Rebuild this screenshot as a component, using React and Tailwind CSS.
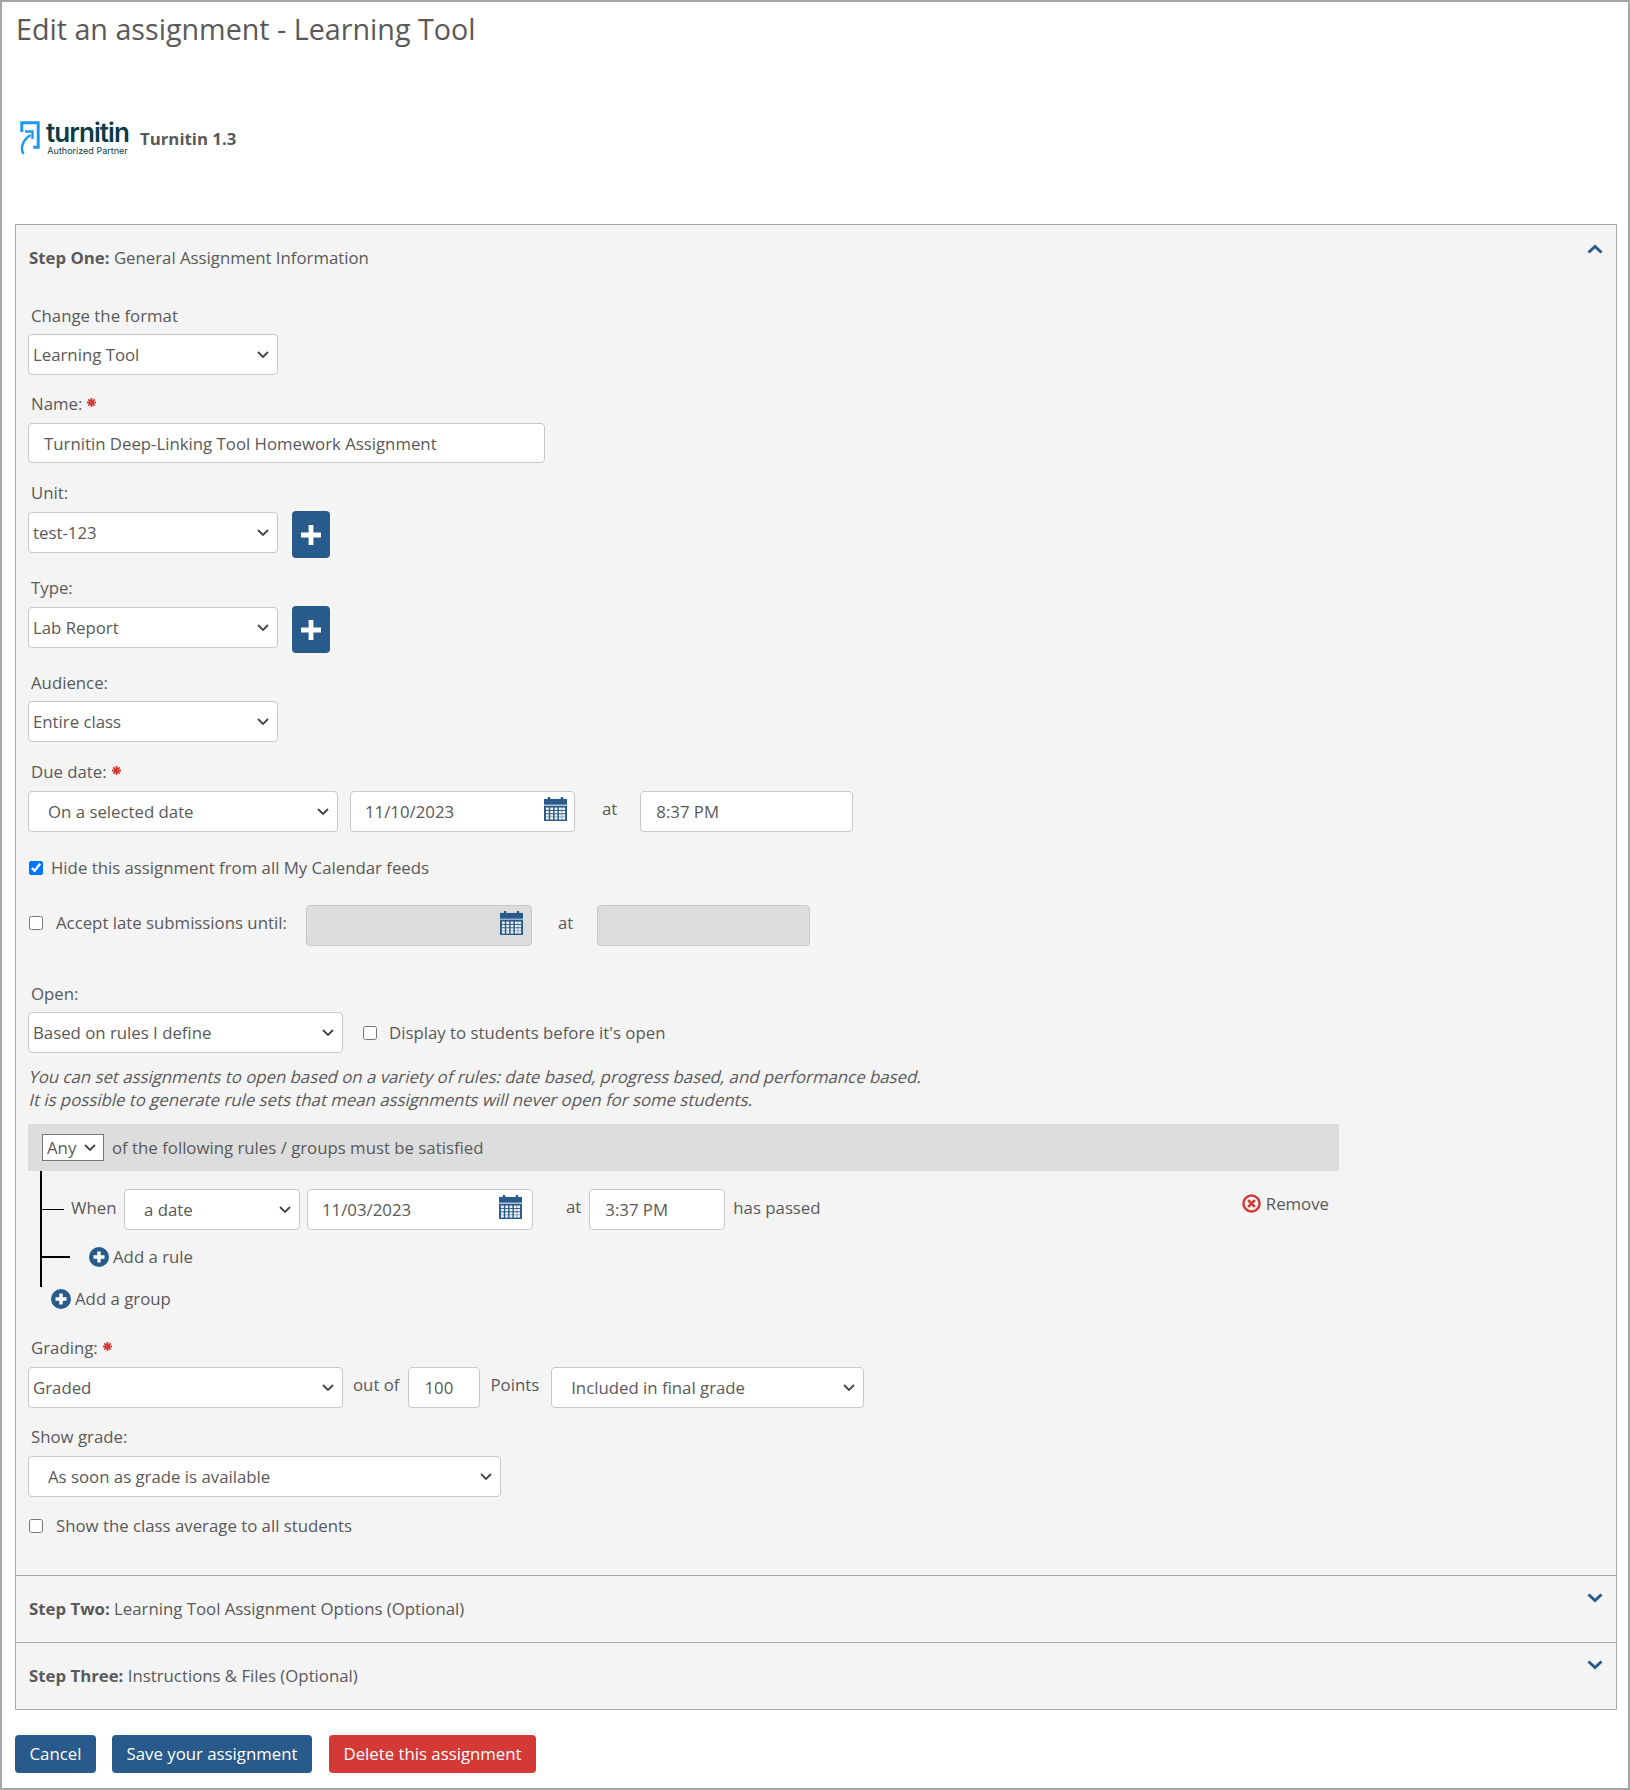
import React from 'react'

function Chevron({ up, className }) {
  return (
    <svg viewBox="0 0 16 10" className={className} fill="none" stroke="#285a8c" strokeWidth="3">
      <path d={up ? 'M1.5 8.5 8 2.5l6.5 6' : 'M1.5 1.5 8 7.5l6.5-6'} />
    </svg>
  )
}

function CalendarIcon() {
  return (
    <svg viewBox="0 0 24 25" className="w-[23px] h-[24px]">
      <rect x="4" y="0" width="2.5" height="4" fill="#285a8c" />
      <rect x="17.5" y="0" width="2.5" height="4" fill="#285a8c" />
      <rect x="0" y="2" width="24" height="6" fill="#285a8c" />
      <rect x="0" y="9" width="24" height="16" fill="#285a8c" />
      <g fill="#f4f4f4">
        {[2, 6.5, 11, 15.5, 19].map((x) =>
          [11, 14.5, 18, 21].map((y) => <rect key={x + '-' + y} x={x} y={y} width="3" height="2.5" />)
        )}
      </g>
    </svg>
  )
}

function PlusCircle() {
  return (
    <svg viewBox="0 0 20 20" className="w-[20px] h-[20px] shrink-0">
      <circle cx="10" cy="10" r="10" fill="#285a8c" />
      <path d="M10 4.5v11M4.5 10h11" stroke="#fff" strokeWidth="3.4" />
    </svg>
  )
}

function AddButton() {
  return (
    <button className="w-[38px] h-[47px] bg-[#285a8c] rounded-[4px] flex items-center justify-center ml-[14px]">
      <svg viewBox="0 0 22 22" className="w-[22px] h-[22px]">
        <path d="M11 1v20M1 11h20" stroke="#fff" strokeWidth="4.8" />
      </svg>
    </button>
  )
}

function Star() {
  return (
    <svg viewBox="0 0 10 10" className="inline-block w-[9px] h-[9px] ml-[5px] mb-[7px]" stroke="#d43936" strokeWidth="2">
      <path d="M5 0v10M0 5h10M1.500 1.500l7 7M8.500 1.500l-7 7" />
    </svg>
  )
}

function Label({ children, required, className = '' }) {
  return (
    <div className={`h-[22px] leading-[22px] pl-[3px] ${className}`}>
      {children}
      {required && <Star />}
    </div>
  )
}

function Select({ value, className = '', pad = 'pl-[4px]' }) {
  return (
    <div className={`relative h-[41px] shrink-0 ${className}`}>
      <select
        defaultValue={value}
        className={`appearance-none w-full h-full bg-white border border-[#c8c8c8] rounded-[4px] text-[#595959] ${pad}`}
      >
        <option>{value}</option>
      </select>
      <svg viewBox="0 0 12 7" className="absolute right-[9px] top-[17px] w-[12px] h-[7px] pointer-events-none" fill="none" stroke="#444444" strokeWidth="1.800">
        <path d="M1 1l5 5 5-5" />
      </svg>
    </div>
  )
}

function TextBox({ value, className = '', disabled }) {
  return (
    <input
      readOnly
      value={value}
      className={`h-[41px] border border-[#c8c8c8] rounded-[4px] text-[#595959] shrink-0 px-[15px] outline-none ${disabled ? 'bg-[#dddddd]' : 'bg-white'} ${className}`}
    />
  )
}

function DateBox({ value, className = '', iconRight = 'right-[7px]', disabled }) {
  return (
    <div className={`relative h-[41px] border border-[#c8c8c8] rounded-[4px] shrink-0 flex items-center pl-[14px] ${disabled ? 'bg-[#dddddd]' : 'bg-white'} ${className}`}>
      {value}
      <span className={`absolute top-[5px] ${iconRight}`}><CalendarIcon /></span>
    </div>
  )
}

function StepHeader({ step, title, up, className = '' }) {
  return (
    <div className={`relative pl-[13px] flex items-center ${className}`}>
      <div><span className="font-bold">{step}</span> {title}</div>
      <Chevron up={up} className={`absolute right-[13px] w-[16px] h-[10px] ${up ? 'top-[19px]' : 'top-[17px]'}`} />
    </div>
  )
}

export default function App() {
  return (
    <div className="w-[1630px] h-[1790px] border-2 border-[#a6a6a6] bg-white text-[#595959] text-[16.8px] font-['Open_Sans',sans-serif] pl-[13px] pr-[11px]">
      <h1 className="text-[28.7px] leading-[44px] pl-[1px] mt-[5px] h-[44px]">Edit an assignment - Learning Tool</h1>

      <div className="flex items-center mt-[68px] h-[38px] pl-[5px]">
        <svg viewBox="0 0 20 34" className="w-[20px] h-[34px] shrink-0">
          <path d="M1.8 11V1.8h16.4v24.4h-5" fill="none" stroke="#1c97f5" strokeWidth="3" />
          <path d="M3.5 33C0.500 28 1.500 20 10.500 14" fill="none" stroke="#1c97f5" strokeWidth="2.4" />
          <path d="M5 10.500h7.500v7.500" fill="none" stroke="#1c97f5" strokeWidth="2.4" />
        </svg>
        <div className="ml-[4px] w-[87px] flex flex-col items-center">
          <span className="font-['Inter',sans-serif] font-semibold text-[#0b3b44] text-[26px] leading-[26px] tracking-[-0.9px]">turnitin</span>
          <span className="text-[#0b3b44] text-[9px] leading-[10px] font-['Inter',sans-serif]">Authorized Partner</span>
        </div>
        <span className="ml-[9px] mt-[2px] font-bold">Turnitin 1.3</span>
      </div>

      <div className="mt-[67px] h-[1486px] border border-[#a9a9a9] bg-[#f4f4f4] flex flex-col">
        <StepHeader step="Step One:" title="General Assignment Information" up className="h-[66px] shrink-0" />

        <div className="flex-1 pl-[12px] pt-[14px]">
          <Label>Change the format</Label>
          <Select value="Learning Tool" className="w-[250px] mt-[7px]" />

          <Label required className="mt-[18px]">Name:</Label>
          <TextBox value="Turnitin Deep-Linking Tool Homework Assignment" className="w-[517px] !h-[40px] mt-[8px] block" />

          <Label className="mt-[19px]">Unit:</Label>
          <div className="flex items-start mt-[7px] h-[48px]">
            <Select value="test-123" className="w-[250px] mt-[1px]" />
            <AddButton />
          </div>

          <Label className="mt-[18px]">Type:</Label>
          <div className="flex items-start mt-[7px] h-[48px]">
            <Select value="Lab Report" className="w-[250px] mt-[1px]" />
            <AddButton />
          </div>

          <Label className="mt-[18px]">Audience:</Label>
          <Select value="Entire class" className="w-[250px] mt-[7px]" />

          <Label required className="mt-[19px]">Due date:</Label>
          <div className="flex items-start mt-[8px]">
            <Select value="On a selected date" className="w-[310px]" pad="pl-[19px]" />
            <DateBox value="11/10/2023" className="w-[225px] ml-[12px]" />
            <span className="ml-[27px] mt-[5px]">at</span>
            <TextBox value="8:37 PM" className="w-[213px] ml-[23px]" />
          </div>

          <label className="flex items-center h-[22px] mt-[25px]">
            <input type="checkbox" defaultChecked className="w-[14px] h-[14px] ml-[1px]" />
            <span className="ml-[8px]">Hide this assignment from all My Calendar feeds</span>
          </label>

          <div className="flex items-start mt-[26px]">
            <input type="checkbox" className="w-[14px] h-[14px] ml-[1px] mt-[11px]" />
            <span className="ml-[13px] mt-[5px] w-[250px]">Accept late submissions until:</span>
            <DateBox className="w-[226px]" iconRight="right-[8px]" disabled />
            <span className="ml-[26px] mt-[5px]">at</span>
            <TextBox value="" className="w-[213px] ml-[24px]" disabled />
          </div>

          <Label className="mt-[37px]">Open:</Label>
          <div className="flex items-center mt-[7px]">
            <Select value="Based on rules I define" className="w-[315px]" />
            <input type="checkbox" className="w-[14px] h-[14px] ml-[20px]" />
            <span className="ml-[12px]">Display to students before it's open</span>
          </div>

          <div className="mt-[12px] leading-[23px] h-[47px] -ml-[1px]">
            <span className="block origin-bottom-left -skew-x-[14deg]">You can set assignments to open based on a variety of rules: date based, progress based, and performance based.</span>
            <span className="block origin-bottom-left -skew-x-[14deg]">It is possible to generate rule sets that mean assignments will never open for some students.</span>
          </div>

          <div className="w-[1311px] h-[47px] bg-[#dddddd] mt-[12px] flex items-center pl-[14px]">
            <div className="relative w-[62px] h-[27px]">
              <select defaultValue="Any" className="appearance-none w-full h-full pl-[4px] bg-white border border-[#777777] text-[#595959]">
                <option>Any</option>
              </select>
              <svg viewBox="0 0 12 7" className="absolute right-[8px] top-[10px] w-[12px] h-[7px] pointer-events-none" fill="none" stroke="#444444" strokeWidth="1.800">
                <path d="M1 1l5 5 5-5" />
              </svg>
            </div>
            <span className="ml-[8px]">of the following rules / groups must be satisfied</span>
          </div>

          <div className="ml-[12px] w-[1300px] h-[116px] border-l-2 border-black">
            <div className="flex items-start pt-[18px]">
              <span className="w-[22px] h-px bg-black mt-[20px] shrink-0" />
              <span className="ml-[7px] mt-[6px] w-[53px] shrink-0">When</span>
              <Select value="a date" className="w-[176px]" pad="pl-[19px]" />
              <DateBox value="11/03/2023" className="w-[226px] ml-[7px]" iconRight="right-[10px]" />
              <span className="ml-[33px] mt-[5px]">at</span>
              <TextBox value="3:37 PM" className="w-[136px] ml-[8px]" />
              <span className="ml-[8px] mt-[6px]">has passed</span>
              <div className="ml-auto mr-[11px] flex items-center gap-[5px] mt-[2px]">
                <svg viewBox="0 0 20 20" className="w-[19px] h-[19px]">
                  <circle cx="10" cy="10" r="8.500" fill="none" stroke="#d43936" strokeWidth="2.600" />
                  <path d="M6.500 6.500l7 7M13.500 6.500l-7 7" stroke="#d43936" strokeWidth="2.800" />
                </svg>
                <span>Remove</span>
              </div>
            </div>
            <div className="flex items-center mt-[14px]">
              <span className="w-[28px] h-[2px] bg-black shrink-0" />
              <span className="ml-[19px]"><PlusCircle /></span>
              <span className="ml-[4px]">Add a rule</span>
            </div>
          </div>

          <div className="flex items-center ml-[23px] mt-[1px] h-[22px]">
            <PlusCircle />
            <span className="ml-[4px]">Add a group</span>
          </div>

          <Label required className="mt-[27px]">Grading:</Label>
          <div className="flex items-start mt-[8px]">
            <Select value="Graded" className="w-[315px]" />
            <span className="ml-[10px] mt-[5px]">out of</span>
            <TextBox value="100" className="w-[72px] ml-[9px]" />
            <span className="ml-[10px] mt-[5px]">Points</span>
            <Select value="Included in final grade" className="w-[313px] ml-[12px]" pad="pl-[19px]" />
          </div>

          <Label className="mt-[18px]">Show grade:</Label>
          <Select value="As soon as grade is available" className="w-[473px] mt-[8px]" pad="pl-[19px]" />

          <label className="flex items-center h-[22px] mt-[18px]">
            <input type="checkbox" className="w-[14px] h-[14px] ml-[1px]" />
            <span className="ml-[13px]">Show the class average to all students</span>
          </label>
        </div>

        <StepHeader step="Step Two:" title="Learning Tool Assignment Options (Optional)" className="h-[67px] shrink-0 border-t border-[#a9a9a9]" />
        <StepHeader step="Step Three:" title="Instructions &amp; Files (Optional)" className="h-[67px] shrink-0 border-t border-[#a9a9a9]" />
      </div>

      <div className="flex mt-[25px] text-white">
        <button className="w-[81px] h-[38px] bg-[#285a8c] rounded-[4px]">Cancel</button>
        <button className="w-[200px] h-[38px] bg-[#285a8c] rounded-[4px] ml-[16px]">Save your assignment</button>
        <button className="w-[207px] h-[38px] bg-[#d43936] rounded-[4px] ml-[17px]">Delete this assignment</button>
      </div>
    </div>
  )
}
